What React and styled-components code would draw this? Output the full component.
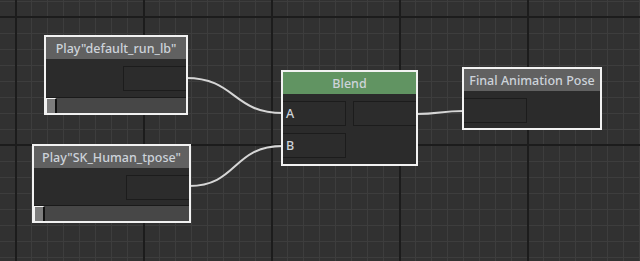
import React from "react";
import styled, { createGlobalStyle } from "styled-components";

const GlobalStyle = createGlobalStyle`
    html, body {
        margin: 0;
        padding: 0;
        background: #313131;
    }
`;

const Canvas = styled.div`
    position: relative;
    width: 640px;
    height: 261px;
    overflow: hidden;

    background-color: #313131;
    background-image:
        linear-gradient(to right, #1c1c1c 2px, transparent 2px),
        linear-gradient(to bottom, #1c1c1c 2px, transparent 2px),
        linear-gradient(to right, #3d3d3d 1px, transparent 1px),
        linear-gradient(to bottom, #3d3d3d 1px, transparent 1px);
    background-size: 128px 128px, 128px 128px, 16px 16px, 16px 16px;
    background-position: 15px 16px, 15px 16px, 15px 17px, 15px 17px;

    font-family: "Noto Sans", "Open Sans", sans-serif;
`;

const Wires = styled.svg`
    position: absolute;
    left: 0;
    top: 0;
`;

const Node = styled.div`
    position: absolute;
    left: ${p => p.x}px;
    top: ${p => p.y}px;
    width: ${p => p.w}px;
    height: ${p => p.h}px;
    box-sizing: border-box;

    display: flex;
    flex-direction: column;

    border: 2px solid #f2f2f2;
    background-color: #2b2b2b;
`;

const Header = styled.div`
    height: 22px;
    flex-shrink: 0;

    display: flex;
    justify-content: center;
    align-items: center;

    background-color: ${p => (p.green ? "#619462" : "#616161")};
    color: #cdd3da;

    font-size: 12.5px;
    font-weight: 500;
    white-space: nowrap;
`;

const Body = styled.div`
    flex: 1;

    display: flex;
    flex-direction: column;
    gap: 7px;

    padding-top: 7px;
`;

const Row = styled.div`
    display: flex;
    justify-content: ${p => p.align || "space-between"};
`;

const Slot = styled.div`
    width: ${p => p.w || 63}px;
    height: 25px;
    box-sizing: border-box;

    display: flex;
    align-items: center;
    padding-left: 3px;

    border: 1px solid #1c1c1c;
    border-left: ${p => (p.left ? "none" : "1px solid #1c1c1c")};
    border-right: ${p => (p.right ? "none" : "1px solid #1c1c1c")};
    background-color: #2c2c2c;

    color: #cdd3da;
    font-size: 12.5px;
    font-weight: 500;
`;

const Slider = styled.div`
    height: 15px;
    flex-shrink: 0;

    display: flex;

    border-top: 1px solid #1a1a1a;
    background-color: #474747;
`;

const Thumb = styled.div`
    width: 8px;
    box-sizing: content-box;

    border-top: 1px solid #f2f2f2;
    border-left: 1px solid #f2f2f2;
    border-right: 2px solid #111;
    background-color: #7d7d7d;
`;

const PlayNode = ({ x, y, w, h, title }) => (
    <Node x={x} y={y} w={w} h={h}>
        <Header>{title}</Header>
        <Body>
            <Row align="flex-end">
                <Slot right />
            </Row>
        </Body>
        <Slider>
            <Thumb />
        </Slider>
    </Node>
);

const App = () => {
    return (
        <>
            <GlobalStyle />
            <Canvas>
                <Wires width="640" height="261">
                    <g fill="none" stroke="#d6d6d6" strokeWidth="2">
                        <path d="M186 78 C 236 78, 232 113, 283 113" />
                        <path d="M189 186 C 238 186, 232 146, 283 146" />
                        <path d="M416 114 C 440 114, 440 111, 464 111" />
                    </g>
                </Wires>

                <PlayNode x={44} y={35} w={144} h={80} title={'Play"default_run_lb"'} />
                <PlayNode x={32} y={144} w={159} h={79} title={'Play"SK_Human_tpose"'} />

                <Node x={281} y={70} w={137} h={96}>
                    <Header green>Blend</Header>
                    <Body>
                        <Row>
                            <Slot left>A</Slot>
                            <Slot right>&nbsp;</Slot>
                        </Row>
                        <Row>
                            <Slot left>B</Slot>
                        </Row>
                    </Body>
                </Node>

                <Node x={462} y={67} w={140} h={63}>
                    <Header>Final Animation Pose</Header>
                    <Body>
                        <Row>
                            <Slot left />
                        </Row>
                    </Body>
                </Node>
            </Canvas>
        </>
    );
};

export default App;
